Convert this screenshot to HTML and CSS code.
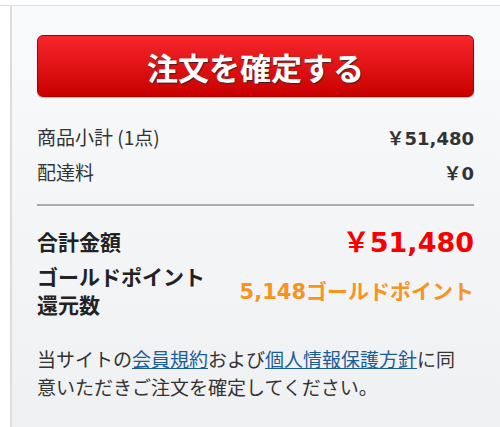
FILE: index.html
```html
<!DOCTYPE html>
<html lang="ja">
<head>
<meta charset="utf-8">
<link rel="stylesheet" href="styles.css">
</head>
<body>
<div class="frame">
  <div class="panel">
    <button class="order-btn" type="button">注文を確定する</button>
    <div class="summary">
      <div class="row"><span class="label">商品小計 (1点)</span><span class="value">￥51,480</span></div>
      <div class="row"><span class="label">配達料</span><span class="value">￥0</span></div>
    </div>
    <hr class="divider">
    <div class="row total"><span class="label">合計金額</span><span class="price">￥51,480</span></div>
    <div class="row points"><span class="label">ゴールドポイント<br>還元数</span><span class="pt">5,148ゴールドポイント</span></div>
    <p class="note">当サイトの<a href="#">会員規約</a>および<a href="#">個人情報保護方針</a>に同意いただきご注文を確定してください。</p>
  </div>
</div>
</body>
</html>
```
FILE: styles.css
```css
html, body {
  margin: 0;
  padding: 0;
  background: #fff;
}
body {
  font-family: "Noto Sans CJK JP", "Noto Sans", sans-serif;
  color: #333;
  width: 500px;
  height: 427px;
  overflow: hidden;
}
.frame {
  margin-top: 5px;
  border-top: 1px solid #dcdcdc;
}
.panel {
  margin-left: 10px;
  border-left: 2px solid #dcdcdc;
  background: linear-gradient(#f9fafc, #eff0f2);
  padding: 29px 26px 0 25px;
  height: 430px;
  box-sizing: border-box;
}
.order-btn {
  display: block;
  width: 100%;
  height: 62px;
  margin: 0;
  padding: 0;
  border: 1px solid #a80000;
  border-radius: 6px;
  background: linear-gradient(#f7262a, #c80000);
  color: #fff;
  font-family: "Noto Sans CJK JP", sans-serif;
  font-size: 31px;
  font-weight: 700;
  text-shadow: 1px 1px 1px #402020;
  box-shadow: 0 1px 1px rgba(0,0,0,0.25);
  cursor: pointer;
}
.summary {
  margin-top: 22px;
}
.row {
  display: flex;
  justify-content: space-between;
  align-items: center;
  height: 35px;
}
.label {
  font-size: 19px;
}
.value {
  font-family: "DejaVu Sans", "Noto Sans CJK JP", sans-serif;
  font-size: 18px;
  font-weight: 700;
}
.divider {
  border: 0;
  height: 2px;
  background: #aaa;
  margin: 15px 0 0 0;
}
.total {
  margin-top: 17px;
}
.total .label,
.points .label {
  font-size: 21px;
  font-weight: 700;
  color: #222;
}
.price {
  font-family: "DejaVu Sans", "Noto Sans CJK JP", sans-serif;
  color: #f80000;
  font-size: 27px;
  font-weight: 700;
}
.points {
  height: auto;
  margin-top: 4px;
}
.points .label {
  line-height: 28px;
}
.pt {
  font-family: "DejaVu Sans", "Noto Sans CJK JP", sans-serif;
  color: #f7931e;
  font-size: 21px;
  font-weight: 700;
}
.note {
  margin: 27px 0 0 0;
  font-size: 19px;
  line-height: 28px;
}
.note a {
  color: #1b5d9a;
  text-decoration: underline;
}
```
